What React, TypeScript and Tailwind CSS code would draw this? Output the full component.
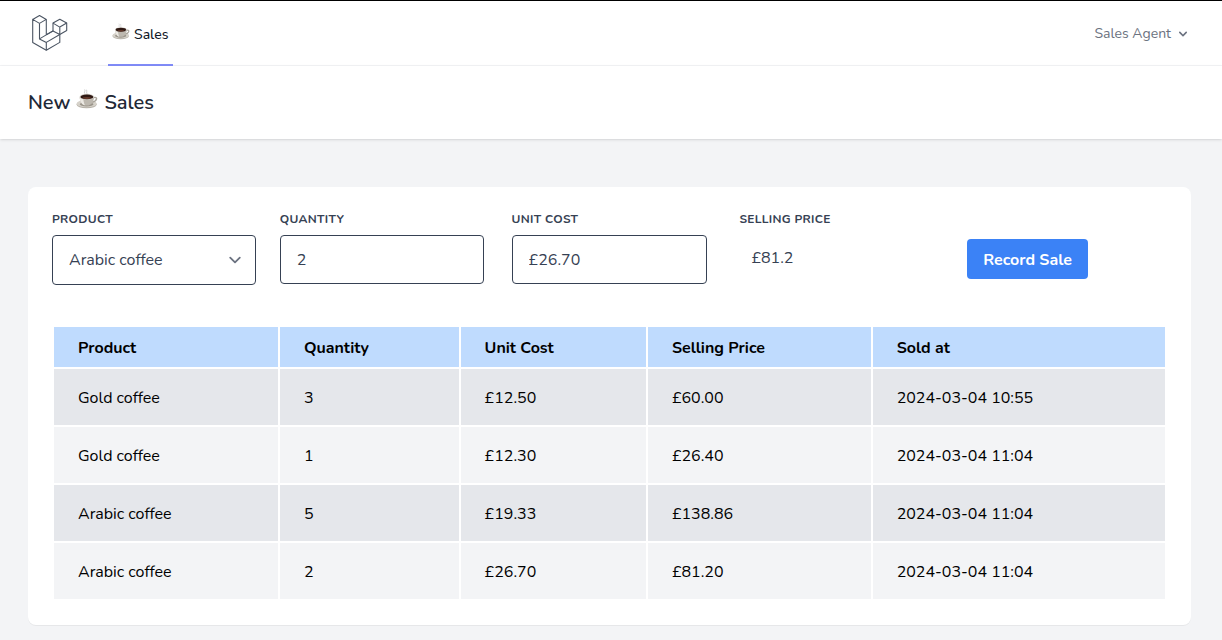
import React, { useState } from "react";

const sales = [
  { product: "Gold coffee", quantity: 3, unitCost: "£12.50", price: "£60.00", soldAt: "2024-03-04 10:55" },
  { product: "Gold coffee", quantity: 1, unitCost: "£12.30", price: "£26.40", soldAt: "2024-03-04 11:04" },
  { product: "Arabic coffee", quantity: 5, unitCost: "£19.33", price: "£138.86", soldAt: "2024-03-04 11:04" },
  { product: "Arabic coffee", quantity: 2, unitCost: "£26.70", price: "£81.20", soldAt: "2024-03-04 11:04" },
];

function Logo() {
  return (
    <svg
      viewBox="0 0 36 36"
      className="h-9 w-9"
      fill="none"
      stroke="#4b5563"
      strokeWidth="1.1"
      strokeLinejoin="round"
      aria-hidden="true"
    >
      <path d="M.7 4.4 7.5.6l6.8 3.8-6.8 4L.7 4.4v23l13.6 7.9 13.5-7.9v-8l6.9-3.9V8.1L27.8 4.2 21 8.1v7.8l-6.7 3.9" />
      <path d="M7.5 8.4v15.5L21 15.9l6.8 3.6-13.5 7.9-6.8-3.5M14.3 4.4v15.4M14.3 27.4v7.9M21 8.1l6.8 4 6.9-4M27.8 12.1v7.4" />
    </svg>
  );
}

function Coffee({ className }: { className: string }) {
  return (
    <svg viewBox="0 0 24 22" className={className} aria-hidden="true">
      <ellipse cx="11.6" cy="17" rx="11" ry="4.2" fill="#b5b0a7" />
      <ellipse cx="11.6" cy="16.1" rx="11" ry="4" fill="#d6d2ca" />
      <ellipse cx="11.6" cy="16.8" rx="7.5" ry="2.4" fill="#9b958b" />
      <path d="M18.6 9.8c2.6-1.2 4.4-.3 3.7 1.6-.6 1.700-2.700 2.900-5.100 3.100" fill="none" stroke="#aaa59c" strokeWidth="1.6" />
      <path d="M4 8.700c0 4.600 2.500 9.400 7.800 9.400s7.900-4.800 7.900-9.400z" fill="#bdb8af" />
      <path d="M4 8.700c0 4.600 2.500 8.700 5.800 9.200-1.200-2-1.800-5.200-1.800-7.900z" fill="#ece9e3" />
      <ellipse cx="11.850" cy="8.500" rx="7.850" ry="3.200" fill="#d0cbc3" />
      <ellipse cx="11.850" cy="8.700" rx="6.900" ry="2.600" fill="#2f1914" />
      <ellipse cx="11.850" cy="9.900" rx="4.300" ry="1" fill="#63392a" />
      <path d="M9.500 4.600c-1.500-1.500 1.500-2 0-3.700M12 4.800c-1.500-1.400 1-2-.6-3.500" fill="none" stroke="#d9d9d9" strokeWidth="1.2" strokeLinecap="round" />
    </svg>
  );
}

const labelClass = "mb-2 block text-xs font-bold uppercase tracking-wide text-gray-700";
const fieldClass = "block w-full rounded border border-gray-700 bg-white px-4 text-base text-gray-700";

export default function App() {
  const [product, setProduct] = useState("Arabic coffee");
  const [quantity, setQuantity] = useState("2");
  const [unitCost, setUnitCost] = useState("£26.70");

  return (
    <div className="min-h-screen border-t border-black bg-[#f3f4f6] font-['Nunito','Lato',sans-serif] text-black">
      <nav className="flex h-[65px] items-stretch border-b border-gray-100 bg-white pr-[31px] pl-8">
        <a href="#home" aria-label="Home" className="flex items-center">
          <Logo />
        </a>
        <a
          href="#sales"
          className="-mb-px ml-10 flex items-center gap-1 border-b-2 border-[#818cf8] px-1 pt-1 text-sm font-medium text-[#111827]"
        >
          <Coffee className="mb-1.5 h-[17px] w-[18px]" />
          Sales
        </a>
        <button type="button" className="ml-auto flex items-center gap-1 pt-0.5 text-sm text-[#6b7280]">
          Sales Agent
          <svg viewBox="0 0 20 20" className="h-4 w-4" fill="currentColor" aria-hidden="true">
            <path
              fillRule="evenodd"
              clipRule="evenodd"
              d="M5.293 7.293a1 1 0 011.414 0L10 10.586l3.293-3.293a1 1 0 111.414 1.414l-4 4a1 1 0 01-1.414 0l-4-4a1 1 0 010-1.414z"
            />
          </svg>
        </button>
      </nav>

      <header className="relative bg-white py-6 pr-[31px] pl-7 shadow">
        <h1 className="flex items-start gap-1.5 text-xl leading-[25px] font-semibold text-[#1f2937]">
          New
          <Coffee className="-mt-0.5 h-[22px] w-[22px]" />
          Sales
        </h1>
      </header>

      <main className="pt-12 pr-[31px] pb-3 pl-7">
        <section className="rounded-lg bg-white p-6 shadow-2xs">
          <form className="grid grid-cols-5 gap-x-6" onSubmit={(e) => e.preventDefault()}>
            <div>
              <label htmlFor="product" className={labelClass}>Product</label>
              <div className="grid items-center">
                <select
                  id="product"
                  value={product}
                  onChange={(e) => setProduct(e.target.value)}
                  className={`${fieldClass} col-start-1 row-start-1 h-[50px] appearance-none`}
                >
                  <option>Arabic coffee</option>
                  <option>Gold coffee</option>
                </select>
                <svg
                  viewBox="0 0 20 20"
                  className="pointer-events-none col-start-1 row-start-1 mr-[9px] h-6 w-6 justify-self-end"
                  fill="none"
                  stroke="#6b7280"
                  strokeWidth="1.5"
                  strokeLinecap="round"
                  strokeLinejoin="round"
                  aria-hidden="true"
                >
                  <path d="M6 8l4 4 4-4" />
                </svg>
              </div>
            </div>
            <div>
              <label htmlFor="quantity" className={labelClass}>Quantity</label>
              <input
                id="quantity"
                value={quantity}
                onChange={(e) => setQuantity(e.target.value)}
                className={`${fieldClass} h-[49px]`}
              />
            </div>
            <div className="px-1">
              <label htmlFor="unit-cost" className={labelClass}>Unit Cost</label>
              <input
                id="unit-cost"
                value={unitCost}
                onChange={(e) => setUnitCost(e.target.value)}
                className={`${fieldClass} h-[49px]`}
              />
            </div>
            <div className="px-1">
              <label htmlFor="selling-price" className={labelClass}>Selling Price</label>
              <output id="selling-price" className="block px-3 py-[11px] text-base text-gray-700">£81.2</output>
            </div>
            <div className="px-1 pt-7">
              <button type="submit" className="rounded bg-[#3b82f6] px-4 pt-[9px] pb-[7px] font-bold whitespace-nowrap text-white">
                Record Sale
              </button>
            </div>
          </form>

          <table className="mt-10 w-full table-fixed border-separate border-spacing-0.5 text-left">
            <colgroup>
              <col className="w-[20.3%]" />
              <col className="w-[16.2%]" />
              <col className="w-[16.8%]" />
              <col className="w-[20.2%]" />
              <col />
            </colgroup>
            <thead>
              <tr className="bg-[#bfdbfe]">
                {["Product", "Quantity", "Unit Cost", "Selling Price", "Sold at"].map((title) => (
                  <th key={title} scope="col" className="px-6 pt-[9px] pb-[7px] font-bold">{title}</th>
                ))}
              </tr>
            </thead>
            <tbody>
              {sales.map((sale, i) => (
                <tr key={i} className="odd:bg-[#e5e7eb] even:bg-[#f3f4f6]">
                  <td className="px-6 pt-[17px] pb-[15px]">{sale.product}</td>
                  <td className="px-6 pt-[17px] pb-[15px]">{sale.quantity}</td>
                  <td className="px-6 pt-[17px] pb-[15px]">{sale.unitCost}</td>
                  <td className="px-6 pt-[17px] pb-[15px]">{sale.price}</td>
                  <td className="px-6 pt-[17px] pb-[15px]">{sale.soldAt}</td>
                </tr>
              ))}
            </tbody>
          </table>
        </section>
      </main>
    </div>
  );
}
